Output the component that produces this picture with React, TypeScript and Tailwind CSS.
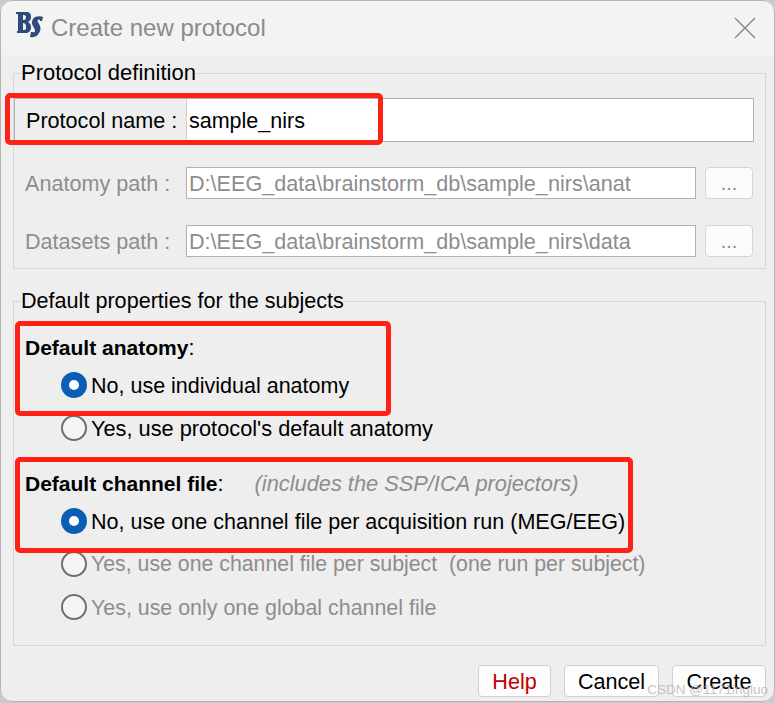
const font = "font-['Liberation_Sans',Arial,sans-serif]";

function Radio({ checked, disabled, label, size = "text-[21.6px]" }: { checked?: boolean; disabled?: boolean; label: string; size?: string }) {
  return (
    <div className="flex items-center h-[26px] pl-[47px]">
      {checked ? (
        <span className="w-[26px] h-[26px] rounded-full bg-[#0a5fb4] flex items-center justify-center">
          <span className="w-[10px] h-[10px] rounded-full bg-white" />
        </span>
      ) : (
        <span className="w-[26px] h-[26px] rounded-full border-2 border-[#6f6f6f] bg-[#f5f5f5]" />
      )}
      <span className={`ml-[4px] pt-[2px] whitespace-pre ${size} ${disabled ? "text-[#8d8d8d]" : "text-black"}`}>{label}</span>
    </div>
  );
}

function PathRow({ label, value }: { label: string; value: string }) {
  return (
    <div className="flex items-center h-[32px]">
      <span className="w-[172px] pl-[11px] pt-[2px] text-[21.6px] text-[#8d8d8d] whitespace-pre">{label}</span>
      <div className="w-[510px] h-[32px] border border-[#b0b0b5] bg-white pl-[2px] text-[21.6px] leading-[32px] text-[#8d8d8d] whitespace-nowrap overflow-hidden">
        {value}
      </div>
      <button className="ml-[9px] w-[48px] h-[32px] rounded-[4px] border border-[#d4d4d4] bg-[#fbfbfb] text-[20px] leading-[30px] text-[#8d8d8d]">
        ...
      </button>
    </div>
  );
}

export default function App() {
  return (
    <div className={`relative w-[775px] h-[703px] overflow-hidden bg-[#c9c9c9] ${font}`}>
      <div className="h-[702px] rounded-[12px] overflow-hidden bg-[#eeeeee]">
        {/* Title bar */}
        <div className="flex items-center h-[55px] bg-[#f3f3f3] pl-[16px] pr-[19px]">
          <svg width="28" height="26" viewBox="0 0 28 26" className="-mt-[5px] blur-[0.5px]">
            <path d="M0 0h10c4 0 5 2 5 5 0 2-1 4-3 5 2 1 3 3 3 5 0 4-2 6-6 6H1v-2h1V2H0z M7 3v5h1c1 0 2-1 2-3 0-1-1-2-2-2z M7 11v7h1c2 0 2-1 2-3 0-3-1-4-3-4z" fill="#2c4a7c" fillRule="evenodd" />
            <path d="M27 5l-1 4h-2c0-1-1-2-2-1-1 1 0 2 1 4 2 3 2 6 0 9-2 4-6 5-9 4l1-5h2c1 1 2 0 2-1 0-2-1-3-2-5-2-3-1-7 2-9 3-1 6-1 8 0z" fill="#2c4a7c" />
          </svg>
          <span className="ml-[7px] text-[24px] text-[#8b8b8b]">Create new protocol</span>
          <svg width="22" height="22" viewBox="0 0 22 22" className="ml-auto" fill="none" stroke="#8a8a8a" strokeWidth="1.5">
            <path d="M1 1l20 20M21 1L1 21" />
          </svg>
        </div>

        <div className="pl-[13px] pr-[9px]">
          {/* Protocol definition */}
          <fieldset className="h-[208px] mt-[6px] border border-[#d6d6d6] pr-[11px]">
            <legend className="ml-[7px] text-[22px] leading-[24px] text-black">Protocol definition</legend>
            <div className="flex h-[44px] mt-[13px] border border-[#b0b0b5]">
              <div className="w-[172px] pl-[11px] text-[21.6px] leading-[44px] text-black border-r border-[#cfcfcf] whitespace-pre">Protocol name :</div>
              <div className="flex-1 bg-white pl-[2px] text-[21.5px] leading-[44px] text-black">sample_nirs</div>
            </div>
            <div className="mt-[25px]"><PathRow label="Anatomy path :" value="D:\EEG_data\brainstorm_db\sample_nirs\anat" /></div>
            <div className="mt-[26px]"><PathRow label="Datasets path :" value="D:\EEG_data\brainstorm_db\sample_nirs\data" /></div>
          </fieldset>

          {/* Default properties */}
          <fieldset className="h-[357px] mt-[20px] border border-[#d6d6d6]">
            <legend className="ml-[7px] text-[21.6px] leading-[24px] text-black">Default properties for the subjects</legend>
            <div className="pl-[11px] mt-[22px] h-[24px] text-[21.6px] leading-[26px] text-black">
              <b className="text-[21px]">Default anatomy</b>:
            </div>
            <div className="mt-[13px]"><Radio checked size="text-[21.5px]" label="No, use individual anatomy" /></div>
            <div className="mt-[17px]"><Radio size="text-[21.75px]" label="Yes, use protocol's default anatomy" /></div>
            <div className="pl-[11px] mt-[30px] h-[24px] text-[21.6px] leading-[26px] text-black whitespace-pre">
              <b className="text-[21px]">Default channel file</b>:<span className="ml-[31px]" /><i className="text-[21.8px] text-[#8d8d8d]">(includes the SSP/ICA projectors)</i>
            </div>
            <div className="mt-[13px]"><Radio checked size="text-[21.55px]" label="No, use one channel file per acquisition run (MEG/EEG)" /></div>
            <div className="mt-[17px]"><Radio disabled size="text-[21.3px]" label="Yes, use one channel file per subject  (one run per subject)" /></div>
            <div className="mt-[17px]"><Radio disabled size="text-[21.4px]" label="Yes, use only one global channel file" /></div>
          </fieldset>

          {/* Buttons */}
          <div className="flex justify-end gap-[13px] mt-[19px]">
            <button className="w-[73px] h-[32px] pb-[3px] rounded-[4px] border border-[#d0d0d0] bg-[#fdfdfd] text-[21.6px] text-[#c00000]">Help</button>
            <button className="w-[95px] h-[32px] pb-[3px] rounded-[4px] border border-[#d0d0d0] bg-[#fdfdfd] text-[21.6px] text-black">Cancel</button>
            <button className="w-[94px] h-[32px] pb-[3px] rounded-[4px] border border-[#d0d0d0] bg-[#fdfdfd] text-[21.6px] text-black">Create</button>
          </div>
        </div>
      </div>

      {/* Window outline */}
      <div className="absolute left-0 top-0 w-[775px] h-[702px] rounded-[12px] border border-[#b4b4b4] pointer-events-none" />

      {/* Red annotation boxes */}
      <div className="absolute left-[5px] top-[93px] w-[378px] h-[52px] border-[5px] border-[#ff2116] rounded-[5px]" />
      <div className="absolute left-[15px] top-[321px] w-[376px] h-[95px] border-[5px] border-[#ff2116] rounded-[5px]" />
      <div className="absolute left-[15px] top-[457px] w-[618px] h-[96px] border-[5px] border-[#ff2116] rounded-[5px]" />

      {/* Watermark */}
      <div className="absolute right-[7px] top-[682px] text-[13.5px] leading-[16px] text-[#b5b5b5]/80">CSDN @1171ingluo</div>
    </div>
  );
}
